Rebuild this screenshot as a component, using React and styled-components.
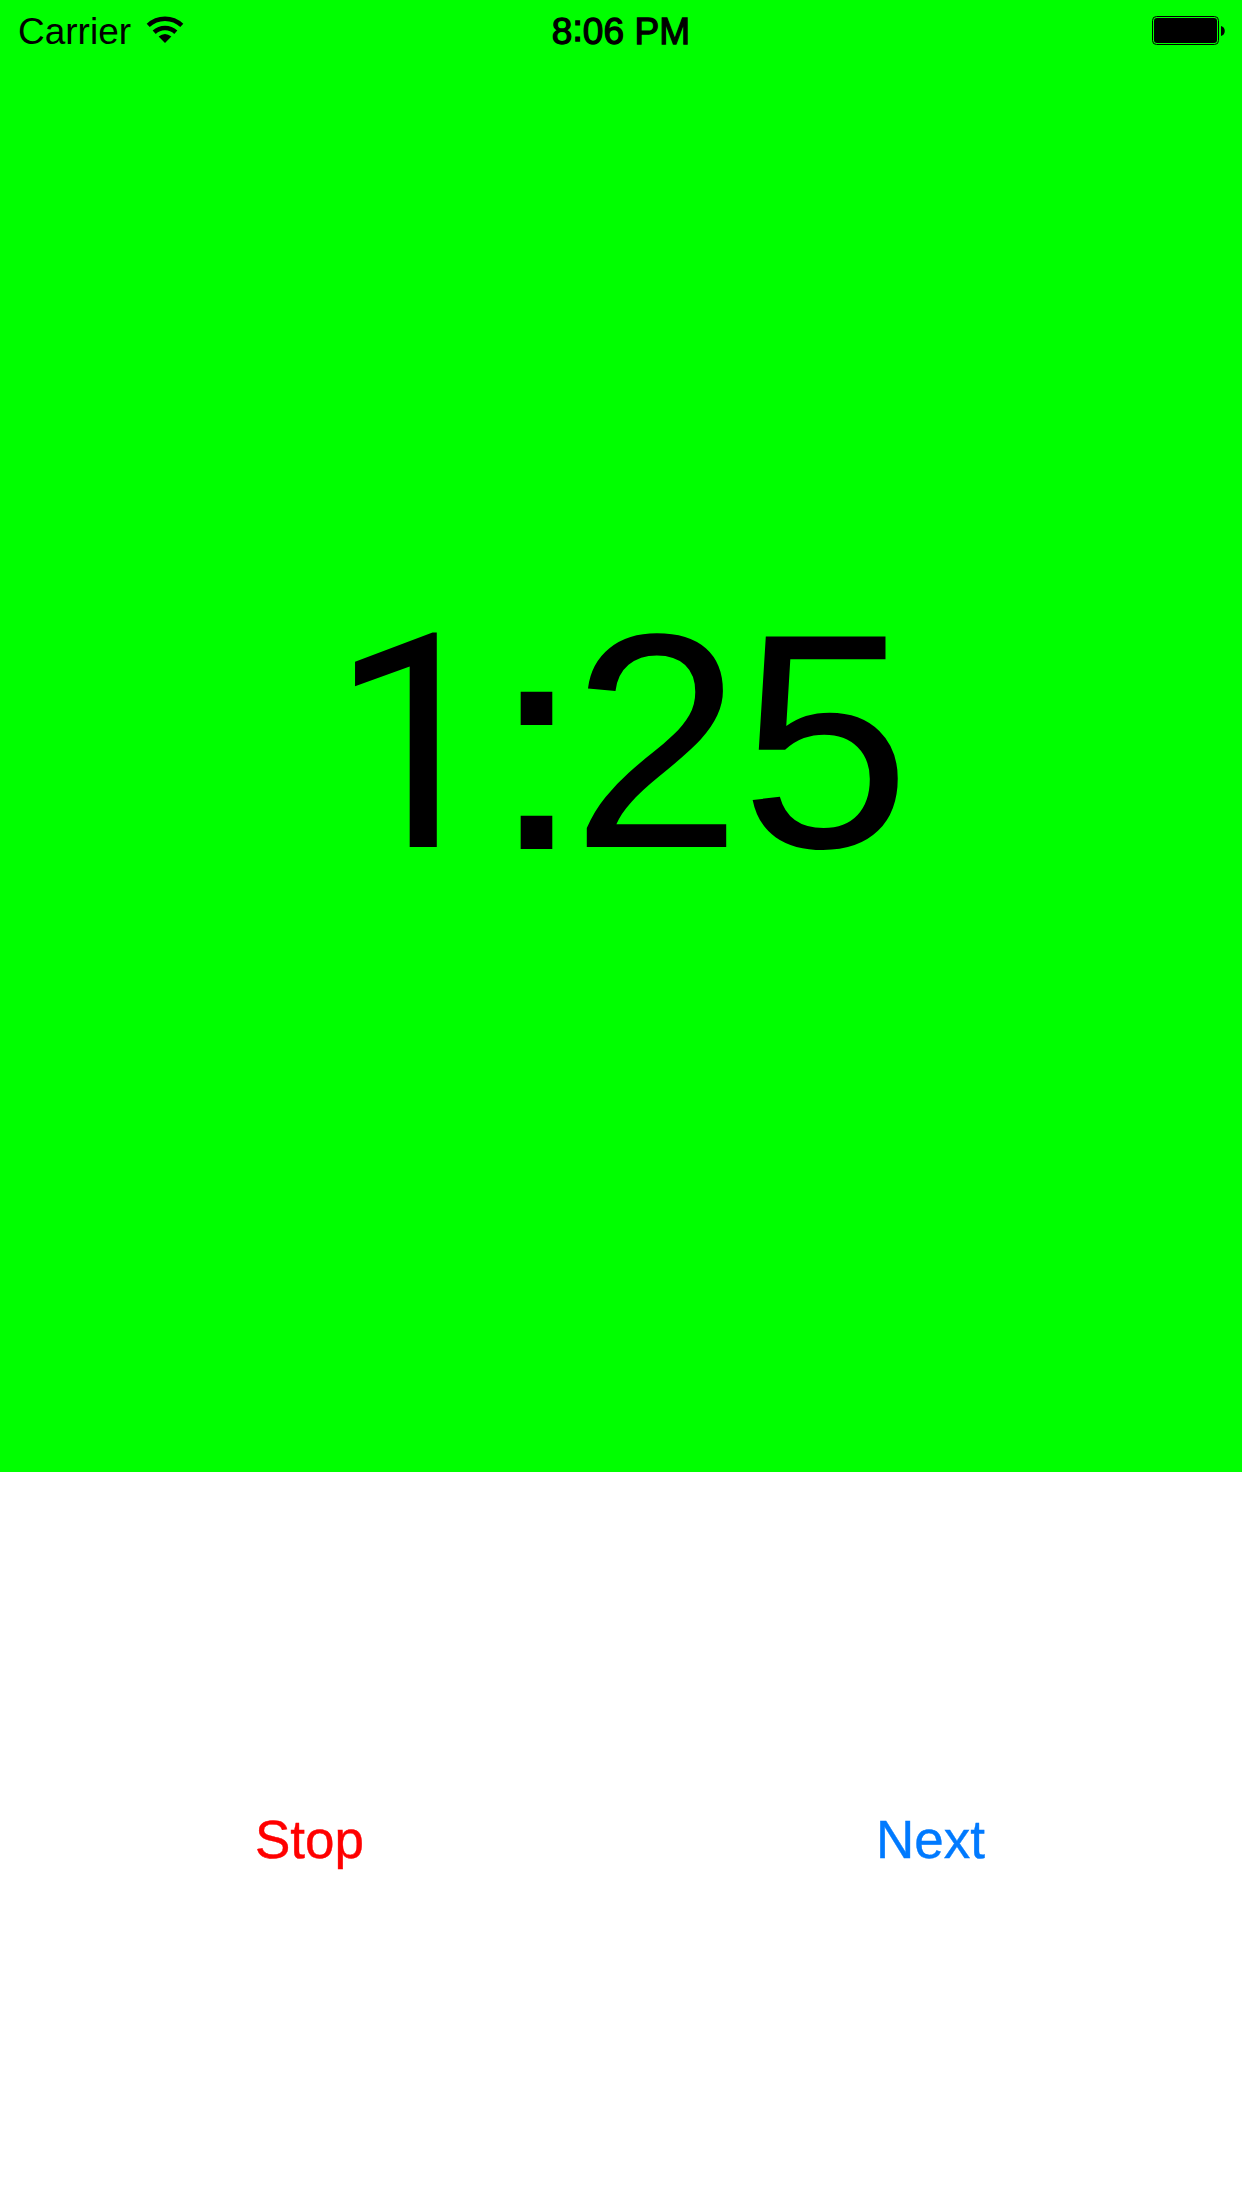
import React from "react";
import styled, { createGlobalStyle } from "styled-components";

const GlobalStyle = createGlobalStyle`
  html, body { margin: 0; padding: 0; background: #fff; }
`;

const Screen = styled.div`
  display: flex;
  flex-direction: column;
  width: 1242px;
  height: 2208px;
  overflow: hidden;
  background: #fff;
  font-family: "Liberation Sans", Arial, sans-serif;
`;

const TimerPanel = styled.main`
  display: flex;
  flex-direction: column;
  height: 1472px;
  background: #00ff00;
  color: #000;
`;

const StatusBar = styled.header`
  display: grid;
  grid-template-columns: 1fr auto 1fr;
  height: 60px;
  padding: 0 17px;
  line-height: 64px;
  font-size: 37px;
  white-space: nowrap;
`;

const Network = styled.div`
  display: flex;
  gap: 15px;
  padding-left: 1px;
`;

const WifiIcon = styled.svg`
  width: 38px;
  height: 30px;
  margin-top: 15px;
`;

const Clock = styled.time`
  font-size: 37px;
  letter-spacing: 0.1px;
  -webkit-text-stroke: 1.3px #000;
`;

const ClockColon = styled.span`
  position: relative;
  top: -3px;
`;

const BatteryIcon = styled.svg`
  justify-self: end;
  width: 74px;
  height: 31px;
  margin-top: 15px;
`;

const Countdown = styled.div`
  display: flex;
  align-items: baseline;
  justify-content: center;
  margin-top: 506px;
  line-height: 350px;
`;

const Glyph = styled.span`
  width: ${(p) => p.$width}px;
  font-family: ${(p) => p.$font || "inherit"};
  font-size: ${(p) => p.$size}px;
  text-align: center;
  text-indent: ${(p) => p.$shift || 0}px;
  -webkit-text-stroke: ${(p) => p.$stroke || 0}px #000;
`;

const Controls = styled.footer`
  display: grid;
  grid-template-columns: 1fr 1fr;
  flex: 1;
`;

const ControlButton = styled.button`
  border: 0;
  padding: 0 2px 2px 0;
  background: transparent;
  color: ${(p) => p.$color};
  font: 53px "Liberation Sans", Arial, sans-serif;
  -webkit-text-stroke: 0.4px ${(p) => p.$color};
`;

export default function App() {
  return (
    <Screen>
      <GlobalStyle />
      <TimerPanel>
        <StatusBar>
          <Network>
            <span>Carrier</span>
            <WifiIcon viewBox="0 0 38 30">
              <path d="M2.2 10.4A24.5 24.5 0 0 1 35.8 10.4" fill="none" stroke="#000" strokeWidth="4.4" />
              <path d="M8.2 17.2A16 16 0 0 1 29.8 17.2" fill="none" stroke="#000" strokeWidth="4.6" />
              <path d="M19 28L12.6 21.6Q19 16.2 25.4 21.6Z" />
            </WifiIcon>
          </Network>
          <Clock>8<ClockColon>:</ClockColon>06 PM</Clock>
          <BatteryIcon viewBox="0 0 74 31">
            <rect x="1.5" y="1.5" width="66" height="28" rx="4" fill="none" stroke="#000" />
            <rect x="3" y="3" width="63" height="25" rx="3" />
            <path d="M70 11C75 12 75 20 70 21Z" />
          </BatteryIcon>
        </StatusBar>
        <Countdown>
          <Glyph $width={167} $size={300} $shift={1} $font='Roboto, "Liberation Sans", sans-serif'>1</Glyph>
          <Glyph $width={83} $size={290} $stroke={4} $shift={-2}>:</Glyph>
          <Glyph $width={167} $size={306} $shift={-12}>2</Glyph>
          <Glyph $width={167} $size={306} $shift={-8}>5</Glyph>
        </Countdown>
      </TimerPanel>
      <Controls>
        <ControlButton $color="#ff0000">Stop</ControlButton>
        <ControlButton $color="#007aff">Next</ControlButton>
      </Controls>
    </Screen>
  );
}
